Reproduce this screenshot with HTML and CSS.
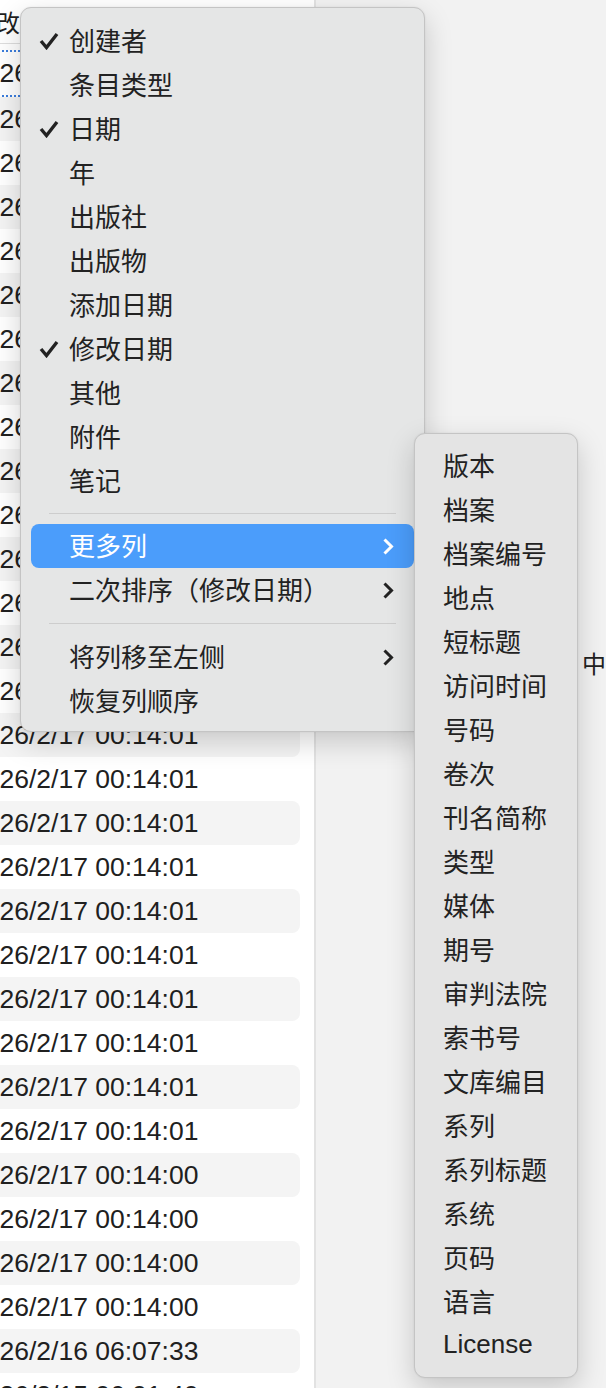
FILE: index.html
```html
<!DOCTYPE html>
<html lang="zh-CN">
<head>
    <meta charset="UTF-8">
    <meta name="viewport" content="width=device-width, initial-scale=1.0">
    <title>列选择菜单</title>
    <link rel="stylesheet" href="styles.css">
</head>
<body>
    <div class="window">
        <section class="list">
            <div class="list-head"><span class="head-label">修改日期</span></div>
            <div class="rows">
                <div class="row focus"><span>2026/2/17 00:14:01</span></div>
                <div class="row"><span>2026/2/17 00:14:01</span></div>
                <div class="row"><span>2026/2/17 00:14:01</span></div>
                <div class="row"><span>2026/2/17 00:14:01</span></div>
                <div class="row"><span>2026/2/17 00:14:01</span></div>
                <div class="row"><span>2026/2/17 00:14:01</span></div>
                <div class="row"><span>2026/2/17 00:14:01</span></div>
                <div class="row"><span>2026/2/17 00:14:01</span></div>
                <div class="row"><span>2026/2/17 00:14:01</span></div>
                <div class="row"><span>2026/2/17 00:14:01</span></div>
                <div class="row"><span>2026/2/17 00:14:01</span></div>
                <div class="row"><span>2026/2/17 00:14:01</span></div>
                <div class="row"><span>2026/2/17 00:14:01</span></div>
                <div class="row"><span>2026/2/17 00:14:01</span></div>
                <div class="row"><span>2026/2/17 00:14:01</span></div>
                <div class="row"><span>2026/2/17 00:14:01</span></div>
                <div class="row"><span>2026/2/17 00:14:01</span></div>
                <div class="row"><span>2026/2/17 00:14:01</span></div>
                <div class="row"><span>2026/2/17 00:14:01</span></div>
                <div class="row"><span>2026/2/17 00:14:01</span></div>
                <div class="row"><span>2026/2/17 00:14:01</span></div>
                <div class="row"><span>2026/2/17 00:14:01</span></div>
                <div class="row"><span>2026/2/17 00:14:01</span></div>
                <div class="row"><span>2026/2/17 00:14:01</span></div>
                <div class="row"><span>2026/2/17 00:14:01</span></div>
                <div class="row"><span>2026/2/17 00:14:00</span></div>
                <div class="row"><span>2026/2/17 00:14:00</span></div>
                <div class="row"><span>2026/2/17 00:14:00</span></div>
                <div class="row"><span>2026/2/17 00:14:00</span></div>
                <div class="row"><span>2026/2/16 06:07:33</span></div>
                <div class="row"><span>2026/2/15 06:01:40</span></div>
            </div>
        </section>
        <section class="pane">
            <span class="pane-text">中</span>
        </section>
    </div>

    <!-- context menu -->
    <div class="menu main-menu">
        <div class="item"><svg class="check" viewBox="0 0 20 18"><path d="M2 9 L7.5 15.5 L18 2"/></svg>创建者</div>
        <div class="item">条目类型</div>
        <div class="item"><svg class="check" viewBox="0 0 20 18"><path d="M2 9 L7.5 15.5 L18 2"/></svg>日期</div>
        <div class="item">年</div>
        <div class="item">出版社</div>
        <div class="item">出版物</div>
        <div class="item">添加日期</div>
        <div class="item"><svg class="check" viewBox="0 0 20 18"><path d="M2 9 L7.5 15.5 L18 2"/></svg>修改日期</div>
        <div class="item">其他</div>
        <div class="item">附件</div>
        <div class="item">笔记</div>
        <div class="sep"></div>
        <div class="item active">更多列<svg class="chev" viewBox="0 0 12 17"><path d="M2.5 1.5 L9.5 8.5 L2.5 15.5"/></svg></div>
        <div class="item">二次排序（修改日期）<svg class="chev" viewBox="0 0 12 17"><path d="M2.5 1.5 L9.5 8.5 L2.5 15.5"/></svg></div>
        <div class="sep wide"></div>
        <div class="item">将列移至左侧<svg class="chev" viewBox="0 0 12 17"><path d="M2.5 1.5 L9.5 8.5 L2.5 15.5"/></svg></div>
        <div class="item">恢复列顺序</div>
    </div>

    <div class="menu sub-menu">
        <div class="item">版本</div>
        <div class="item">档案</div>
        <div class="item">档案编号</div>
        <div class="item">地点</div>
        <div class="item">短标题</div>
        <div class="item">访问时间</div>
        <div class="item">号码</div>
        <div class="item">卷次</div>
        <div class="item">刊名简称</div>
        <div class="item">类型</div>
        <div class="item">媒体</div>
        <div class="item">期号</div>
        <div class="item">审判法院</div>
        <div class="item">索书号</div>
        <div class="item">文库编目</div>
        <div class="item">系列</div>
        <div class="item">系列标题</div>
        <div class="item">系统</div>
        <div class="item">页码</div>
        <div class="item">语言</div>
        <div class="item">License</div>
    </div>
</body>
</html>
```

FILE: styles.css
```css
body {
    margin: 0;
    padding: 0;
    width: 606px;
    height: 1388px;
    overflow: hidden;
    font-family: "Liberation Sans", "Noto Sans CJK SC", sans-serif;
    color: #1f1f1f;
    background-color: #f2f2f2;
}

.window {
    display: flex;
    height: 1388px;
}

.list {
    width: 314px;
    flex-shrink: 0;
    background-color: #ffffff;
    border-right: 2px solid #e2e2e2;
    overflow: hidden;
}

.list-head {
    height: 43px;
    border-bottom: 1px solid #dedede;
    display: flex;
    align-items: center;
    font-size: 24px;
    white-space: nowrap;
}

.head-label {
    margin-left: -28px;
}

.rows {
    padding-top: 9px;
}

.row {
    height: 44px;
    width: 330px;
    margin-left: -30px;
    box-sizing: border-box;
    display: flex;
    align-items: center;
    font-size: 26.5px;
    white-space: nowrap;
    border-radius: 8px;
    color: #202020;
}

.row:nth-child(even) {
    background-color: #f4f4f4;
}

.row.focus {
    border-top: 2px dotted #3b7ddd;
    border-bottom: 2px dotted #3b7ddd;
    border-radius: 0;
    margin-top: -3px;
    height: 47px;
}

.pane {
    flex: 1;
    padding: 645px 0 0 266px;
    font-size: 24px;
    white-space: nowrap;
    color: #222222;
}

.menu {
    position: absolute;
    background-color: #e5e6e6;
    border: 1px solid #c4c4c4;
    border-radius: 11px;
    box-shadow: 0 10px 28px rgba(0, 0, 0, 0.18), 0 0 2px rgba(0, 0, 0, 0.08);
    font-family: "Liberation Sans", "Noto Sans CJK SC", sans-serif;
    font-size: 26px;
    color: #222222;
}

.main-menu {
    left: 20px;
    top: 7px;
    width: 403px;
    padding: 11px 0 8px;
}

.sub-menu {
    left: 414px;
    top: 433px;
    width: 162px;
    padding: 10px 0 9px;
    background-color: #e4e4e4;
}

.item {
    position: relative;
    height: 44px;
    margin: 0 10px;
    padding-left: 38px;
    padding-bottom: 4px;
    box-sizing: border-box;
    display: flex;
    align-items: center;
    white-space: nowrap;
    border-radius: 8px;
}

.sub-menu .item {
    padding-left: 18px;
}

.item.active {
    background-color: #4b9dfb;
    color: #ffffff;
}

.check {
    position: absolute;
    left: 8px;
    top: 13px;
    width: 20px;
    height: 18px;
    fill: none;
    stroke: #222222;
    stroke-width: 3.4;
}

.chev {
    position: absolute;
    right: 20px;
    top: 14px;
    width: 12px;
    height: 17px;
    fill: none;
    stroke: #222222;
    stroke-width: 3;
}

.item.active .chev {
    stroke: #ffffff;
}

.sep {
    height: 1px;
    margin: 10px 28px 10px 28px;
    background-color: #cdcdcd;
}

.sep.wide {
    margin: 11px 28px 11px 28px;
}
```
